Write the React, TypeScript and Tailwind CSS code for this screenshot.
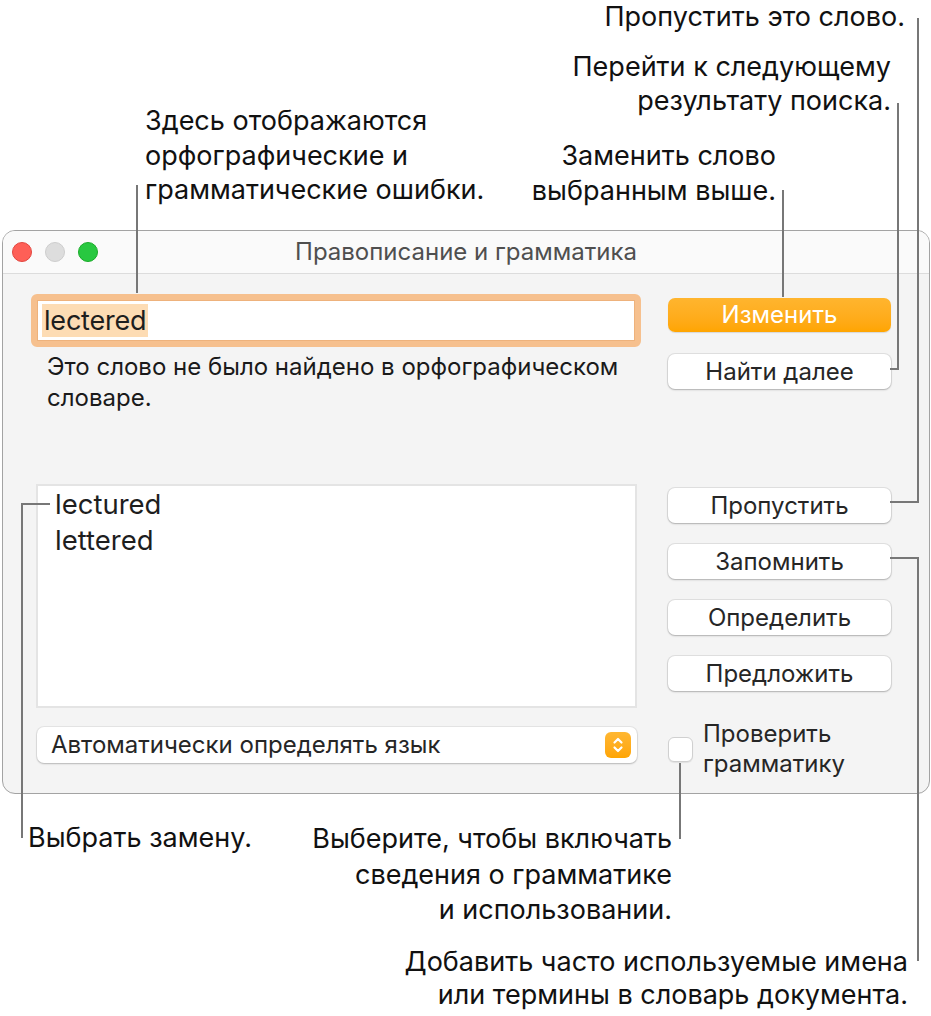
import React from "react";

const font = { fontFamily: "Inter, 'Noto Sans', sans-serif" };

function Btn({ label, className = "" }: { label: string; className?: string }) {
  return (
    <div
      className={`h-[35px] w-[223px] rounded-[7px] bg-white flex items-center justify-center text-[24px] text-[#262626] shadow-[0_0_0_1px_rgba(0,0,0,0.08),0_1px_2px_rgba(0,0,0,0.22)] ${className}`}
    >
      {label}
    </div>
  );
}

export default function App() {
  return (
    <div className="relative w-[931px] h-[1016px] bg-white overflow-hidden" style={font}>
      {/* window */}
      <div className="pt-[230px] pl-[2px]">
        <div className="w-[928px] h-[564px] rounded-[13px] border-[1.5px] border-[#a3a3a3] bg-[#f4f4f4] overflow-hidden">
          <div className="h-[43px] bg-[#fafafa] border-b border-[#dcdcdc] grid grid-cols-[1fr_auto_1fr] items-center">
            <div className="flex items-center gap-[13px] pl-[9px]">
              <div className="w-[20px] h-[20px] rounded-full bg-[#fe5f57] border border-[#e2463f]" />
              <div className="w-[20px] h-[20px] rounded-full bg-[#dddddd] border border-[#cdcdcd]" />
              <div className="w-[20px] h-[20px] rounded-full bg-[#28c840] border border-[#1aab29]" />
            </div>
            <div className="text-[24px] leading-[30px] text-[#4f4f4f]">Правописание и грамматика</div>
            <div />
          </div>
          <div className="flex pl-[28px] pt-[20px]">
            {/* left column */}
            <div className="w-[610px] flex flex-col">
              <div className="h-[53px] rounded-[6px] border-[6px] border-[#f6c08e] bg-white flex items-center pl-[5px] shadow-[inset_0_0_0_1px_#eeb27c]">
                <span className="bg-[#fddcb4] text-[27px] leading-[33px] text-[#1e1e1e] px-[2px] tracking-[-0.2px]">lectered</span>
              </div>
              <div className="mt-[4px] pl-[16px] text-[24px] leading-[31px] text-[#1a1a1a]">
                Это слово не было найдено в орфографическом
                <br />
                словаре.
              </div>
              <div className="mt-[71px] ml-[5px] w-[601px] h-[224px] bg-white border-2 border-[#e4e4e4] pl-[17px] text-[27.5px] leading-[36px] text-[#1e1e1e]">
                <div>lectured</div>
                <div>lettered</div>
              </div>
              <div className="mt-[19px] ml-[6px] w-[600px] h-[36px] rounded-[7px] bg-white shadow-[0_0_0_1px_rgba(0,0,0,0.06),0_1px_2px_rgba(0,0,0,0.2)] flex items-center justify-between pl-[14px] pr-[6px]">
                <span className="text-[24px] text-[#262626]">Автоматически определять язык</span>
                <div className="w-[26px] h-[26px] rounded-[6px] bg-gradient-to-b from-[#ffb731] to-[#ffa500] flex items-center justify-center">
                  <svg width="26" height="26" viewBox="0 0 26 26" fill="none" stroke="white" strokeWidth="2.2" strokeLinecap="round" strokeLinejoin="round">
                    <path d="M9.5 10.5 L13 7 L16.5 10.5" />
                    <path d="M9.5 15.5 L13 19 L16.5 15.5" />
                  </svg>
                </div>
              </div>
            </div>
            {/* right column */}
            <div className="ml-[27px] w-[223px] flex flex-col">
              <div className="mt-[4px] h-[34px] w-[223px] rounded-[7px] bg-gradient-to-b from-[#ffb52e] to-[#ffa500] flex items-center justify-center text-[24px] text-white shadow-[0_1px_1px_rgba(0,0,0,0.12)]">
                Изменить
              </div>
              <Btn label="Найти далее" className="mt-[22px] h-[34px]" />
              <Btn label="Пропустить" className="mt-[99px]" />
              <Btn label="Запомнить" className="mt-[21px]" />
              <Btn label="Определить" className="mt-[21px]" />
              <Btn label="Предложить" className="mt-[21px]" />
              <div className="mt-[28px] flex items-center gap-[10px]">
                <div className="w-[25px] h-[25px] rounded-[6px] bg-white border border-[#d0d0d0] shadow-[0_1px_1px_rgba(0,0,0,0.08)]" />
                <div className="text-[24px] leading-[30px] text-[#262626]">
                  Проверить
                  <br />
                  грамматику
                </div>
              </div>
            </div>
          </div>
        </div>
      </div>

      {/* annotations */}
      <div className="absolute top-0 right-[26px] text-[27px] leading-[34px] text-[#111] text-right">Пропустить это слово.</div>
      <div className="absolute top-[50px] right-[40px] text-[27px] leading-[34px] text-[#111] text-right">
        Перейти к следующему
        <br />
        результату поиска.
      </div>
      <div className="absolute top-[104px] left-[145px] text-[27px] leading-[34.5px] text-[#111]">
        Здесь отображаются
        <br />
        орфографические и
        <br />
        грамматические ошибки.
      </div>
      <div className="absolute top-[139px] right-[155px] text-[27px] leading-[34.5px] text-[#111] text-right">
        Заменить слово
        <br />
        выбранным выше.
      </div>
      <div className="absolute top-[821px] left-[28px] text-[27px] leading-[34px] text-[#111]">Выбрать замену.</div>
      <div className="absolute top-[821px] right-[259px] text-[27px] leading-[35.5px] text-[#111] text-right">
        Выберите, чтобы включать
        <br />
        сведения о грамматике
        <br />
        и использовании.
      </div>
      <div className="absolute top-[945px] right-[23px] text-[27px] leading-[33px] text-[#111] text-right">
        Добавить часто используемые имена
        <br />
        или термины в словарь документа.
      </div>

      {/* leader lines */}
      <div className="absolute left-[917px] top-[18px] w-[2px] h-[485px] bg-[#777]" />
      <div className="absolute left-[890px] top-[501px] w-[29px] h-[2px] bg-[#777]" />

      <div className="absolute left-[897px] top-[103px] w-[2px] h-[267px] bg-[#777]" />
      <div className="absolute left-[890px] top-[368px] w-[9px] h-[2px] bg-[#777]" />

      <div className="absolute left-[136px] top-[185px] w-[2px] h-[108px] bg-[#777]" />
      <div className="absolute left-[782px] top-[190px] w-[2px] h-[107px] bg-[#777]" />

      <div className="absolute left-[21px] top-[503px] w-[2px] h-[335px] bg-[#777]" />
      <div className="absolute left-[21px] top-[503px] w-[29px] h-[2px] bg-[#777]" />

      <div className="absolute left-[679px] top-[763px] w-[2px] h-[76px] bg-[#777]" />

      <div className="absolute left-[890px] top-[557px] w-[29px] h-[2px] bg-[#777]" />
      <div className="absolute left-[917px] top-[557px] w-[2px] h-[404px] bg-[#777]" />
    </div>
  );
}
